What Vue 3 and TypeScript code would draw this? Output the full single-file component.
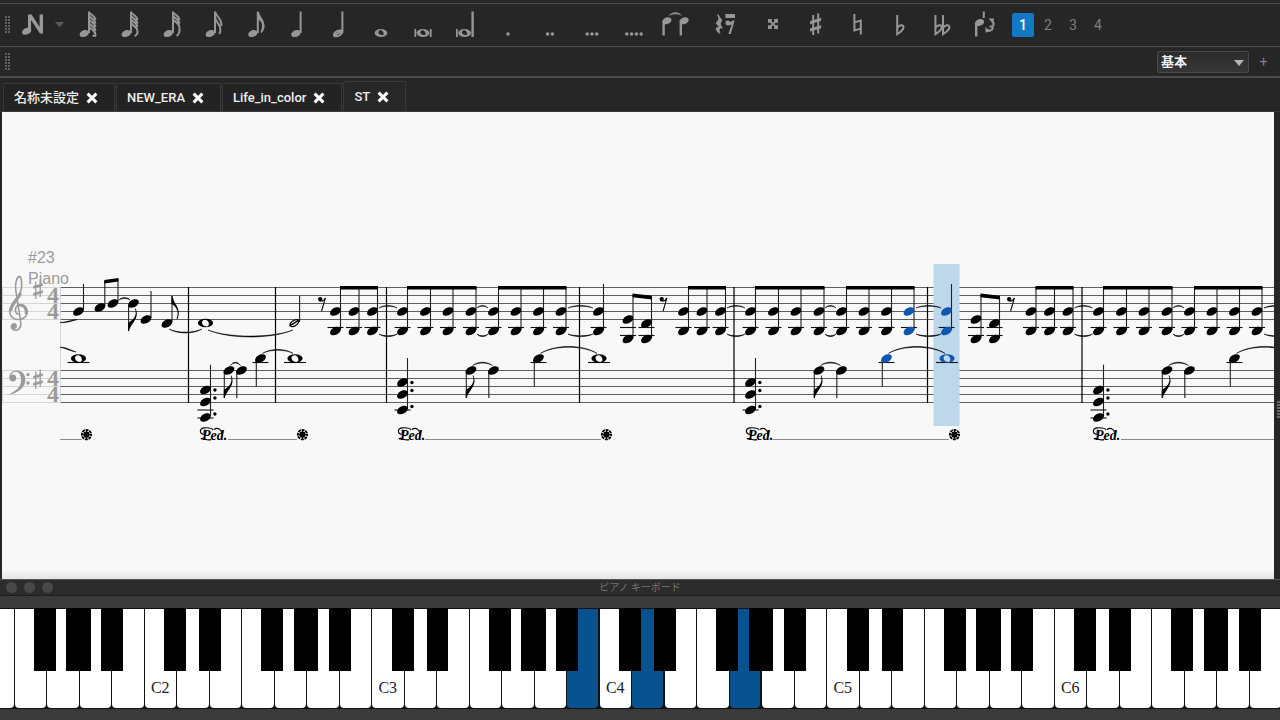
<script setup lang="ts">
import { ref } from 'vue'

type Head = { x: number; y: number; on?: boolean }
type Seg = { x1: number; y1: number; x2: number; y2: number }

/* ---------- toolbar ---------- */
const head = (x: number, y: number) =>
  `M${x - 4.8} ${y + 1.4}C${x - 4.6} ${y - 1.8} ${x - 0.5} ${y - 3.8} ${x + 2.2} ${y - 3.2}C${x + 5} ${y - 2.6} ${x + 4.9} ${y} ${x + 3.6} ${y + 1.6}C${x + 1.6} ${y + 3.8} ${x - 4.6} ${y + 5} ${x - 4.8} ${y + 1.4}Z`
const flags = (n: number) => {
  let d = ''
  for (let i = 0; i < n; i++) d += `M1 ${12 + i * 3.6}C2 ${15 + i * 3.6} 7 ${15 + i * 3.6} 7.4 ${20 + i * 3.6}`
  const y = 12 + (n - 1) * 3.6
  return d + `M7.4 ${y + 8}C8 ${y + 11} 7 35 4.6 36`
}
const stem = 'M0 11.5H2V33H0Z'
const whole = (x: number) =>
  `M${x - 6.4} 33a6.4 4 0 1 1 12.8 0a6.4 4 0 1 1 -12.8 0ZM${x - 2.6} 32c-.4 2 2 3 4 3c1.2 0 1.8 -1 .6 -3c-1 -2 -3.6 -2.4 -4.6 0Z`
const breve = (x: number) => whole(x) + `M${x - 8.6} 29h1.8v8h-1.8ZM${x + 6.8} 29h1.8v8h-1.8Z`
const dots = (n: number) =>
  Array.from({ length: n }, (_, i) => {
    const x = (i - (n - 1) / 2) * 4.8
    return `M${x - 1.8} 34a1.8 1.8 0 1 0 3.6 0a1.8 1.8 0 1 0 -3.6 0Z`
  }).join('')
const flat = (x: number) => `M${x} 15V34.2C${x + 3} 32.5 ${x + 7} 29 ${x + 6.4} 26.6C${x + 5.6} 24.4 ${x + 2} 25 ${x} 28`

interface Icon { name: string; fill?: string; line?: string; wide?: boolean }
const icons: Icon[] = [
  { name: '128分音符', fill: head(-3.6, 33.4) + stem, line: flags(5) },
  { name: '64分音符', fill: head(-3.6, 33.4) + stem, line: flags(4) },
  { name: '32分音符', fill: head(-3.6, 33.4) + stem, line: flags(3) },
  { name: '16分音符', fill: head(-3.6, 33.4) + stem, line: 'M1.4 12C2 17 8 18 7.4 26M1.4 18C2 23 9 26 5.4 34' },
  { name: '8分音符', fill: head(-3, 33.4) + 'M.8 11.5H2.8C4 17 8.6 20 8.6 26C8.6 29 7.4 31 5.4 33L4.4 32C7.4 26 5.8 21 2.8 20V33H.8Z' },
  { name: '4分音符', fill: head(-2, 33.4) + 'M1.6 11.5H3.6V33H1.6Z' },
  { name: '2分音符', fill: 'M1.4 11.5H3.4V33H1.4Z', line: 'M-6 35.4C-6.4 32 -1 29.6 1.8 31C3.2 33 -1 36.4 -3.6 36.2C-5 36.2 -6 36 -6 35.4ZL2 31.2' },
  { name: '全音符', fill: whole(-1) },
  { name: '倍全音符', fill: breve(-1) },
  { name: 'ロンガ', fill: breve(-1.4) + 'M5.4 11.5h2.4V37H5.4Z' },
  { name: '付点', fill: dots(1) },
  { name: '複付点', fill: dots(2) },
  { name: '三重付点', fill: dots(3) },
  { name: '四重付点', fill: dots(4) },
  { name: 'タイ', fill: head(-9, 20.6) + head(8.2, 20.6) + 'M-13.6 20.6h2.4V35.6h-2.4ZM3.6 20.6h2.4V35.6h-2.4ZM-7.4 16C-4 11 3 11 6 16C3 13.8 -4 13.8 -7.4 16Z' },
  { name: '休符', wide: true, fill: 'M-7 14L-2.6 20.5C-5 23 -4.6 25 -1.6 28.6C-5 27.6 -6.4 29 -4.6 33L-5.4 33.8C-10 30.4 -10.6 26.6 -6 27L-9.4 23C-6 20 -6 18.4 -7.8 15ZM.4 14h9.6v4H.4ZM.4 23a2.4 2.4 0 1 1 4.8 0a2.4 2.4 0 1 1 -4.8 0ZM7.6 20.6H9.6L5.8 34H3.4L6.6 24.6L3.4 25.4V23.4Z' },
  { name: 'ダブルシャープ', wide: true, fill: 'M-6 19h3.8v2.4l1.2 1.4l1.2 -1.4v-2.4h3.8v3.8h-2.4l-1.4 1.2l1.4 1.2h2.4v3.8h-3.8v-2.4l-1.2 -1.4l-1.2 1.4v2.4h-3.8v-3.8h2.4l1.4 -1.2l-1.4 -1.2h-2.4Z' },
  { name: 'シャープ', fill: 'M-6 21.2L5.2 17.8V20.8L-6 24.2ZM-6 28.6L5.2 25.2V28.2L-6 31.6Z', line: 'M-2.8 15V35M2.2 13.6V33.6' },
  { name: 'ナチュラル', line: 'M-3.6 14V30.4L2.8 28.6M-3.6 22.4L2.8 20.6V34.4' },
  { name: 'フラット', line: flat(-2.8) },
  { name: 'ダブルフラット', line: flat(-6.6) + flat(1) },
  { name: '音符の反転', fill: head(-4.4, 22.4) + 'M-9 22.4h2.4v14h-2.4ZM-1.2 11.5H.8V18H-1.2ZM4.6 18.6L10 18.4L9.4 24ZM1.4 27L1.6 32.6L6.8 31.6Z', line: 'M7.6 20.6C11 23.4 10 27.4 5.6 26.4M3.6 29.8C6.4 31.6 9.4 29.6 8.4 26.8' },
]
const voice = ref(1)
const tabs = ['名称未設定', 'NEW_ERA', 'Life_in_color', 'ST']
const activeTab = ref(3)
const workspace = ref('基本')

/* ---------- score ---------- */
const treble = [287.5, 295.5, 303.5, 311.5, 319.5]
const bass = [370.5, 378.5, 386.5, 394.5, 402.5]
const bars = [188.5, 275.5, 386.5, 579.5, 734, 927.5, 1082]
const heads: Head[] = []
const wholes: Head[] = []
const lines: Seg[] = []
const ledgers: Seg[] = []
const ties: string[] = []
const beams: string[] = []
const downFlags: { x: number; y: number }[] = []
const addDots: Head[] = []
const rests = [322, 663.5, 1011]

const note = (x: number, y: number, on = false) => heads.push({ x, y, on })
const vline = (x: number, y1: number, y2: number) => lines.push({ x1: x, x2: x, y1, y2 })
const ledger = (x: number, y: number, w = 8) => ledgers.push({ x1: x - w, x2: x + w, y1: y, y2: y })
const tie = (x1: number, x2: number, y: number, h: number, y2 = y) => {
  const m = (x2 - x1) / 4
  const c = h * 1.33
  const t = h > 0 ? -1.2 : 1.2
  ties.push(`M${x1} ${y}C${x1 + m} ${y + c} ${x2 - m} ${y2 + c} ${x2} ${y2}C${x2 - m} ${y2 + c + t} ${x1 + m} ${y + c + t} ${x1} ${y}Z`)
}
const beam = (x1: number, y1: number, x2: number, y2: number) =>
  beams.push(`M${x1 - 0.5} ${y1}L${x2 + 0.5} ${y2}v3.6L${x1 - 0.5} ${y1 + 3.6}Z`)
const dyad = (x: number, top: number, on = false) => {
  note(x, 311.5, on)
  note(x, 331, on)
  ledger(x, 327.5)
  vline(x + 5, top, 330)
}
const group = (xs: number[], lastOn = false) => {
  xs.forEach((x, i) => dyad(x, 287, lastOn && i === xs.length - 1))
  beam(xs[0] + 5, 286, xs[xs.length - 1] + 5, 286)
}
const pairTie = (x1: number, x2: number) => {
  tie(x1, x2, 308, -2.6)
  tie(x1, x2, 334, 2.6)
}

/* opening bars */
note(78.5, 311.5); vline(83.5, 284, 310)
note(100, 307.5); vline(104.8, 281, 306)
note(113, 303.5); vline(118, 279, 302)
beam(104.8, 280, 118, 278)
tie(119, 130, 300, -2.4)
note(133.5, 303.5); vline(128.6, 305, 331); downFlags.push({ x: 128.6, y: 331 })
note(146, 319.5); vline(151, 291, 318)
note(167, 323.5); vline(172, 296, 322)
tie(60, 77, 322.4, 1, 319.6)
tie(169, 202, 329, 4)
tie(208, 293, 330, 7)
wholes.push({ x: 205.5, y: 323 })
vline(299.6, 296, 322)

/* repeated figures, one period every 348 units */
for (const o of [0, 348]) {
  group([335.5 + o, 354 + o, 372.5 + o])
  pairTie(379 + o, 397 + o)
}
group([1031, 1049.5, 1068])
pairTie(1074.5, 1092.5)
for (const o of [0, 348, 696]) {
  group([402.5 + o, 425.5 + o, 448 + o, 471 + o])
  pairTie(477 + o, 488 + o)
  group([493.5 + o, 516 + o, 538.5 + o, 561 + o], o === 348)
  pairTie(568 + o, 593 + o)
  const a = o === 696 ? 7.5 : 0
  chord(402.5 + o, a)
  bassFigure(471 + o, 493.5 + o, 538.5 + o, 599 + o, o === 348)
}
for (const o of [0, 348]) {
  dyad(598.5 + o, 284, o === 348)
  note(628 + o, 319.5); note(628 + o, 339); vline(633 + o, 295, 338)
  note(646.5 + o, 323.5); note(646.5 + o, 339); vline(651.5 + o, 297, 338)
  for (const x of [628, 646.5]) { ledger(x + o, 327.5); ledger(x + o, 335.5) }
  beam(633 + o, 293.6, 651.5 + o, 295.8)
}
function chord(x: number, shift: number) {
  for (const y of [382.5, 394.5, 410]) note(x, y + shift)
  ledger(x, 410)
  if (shift) ledger(x, 418)
  vline(x + 5, 358 + shift * 0.9, 409 + shift)
  for (const y of [382.5, 390.5, 406.5]) addDots.push({ x: x + 10, y: y + shift })
}
function bassFigure(e: number, q: number, h: number, w: number, on: boolean) {
  note(e, 370.5); vline(e - 4.7, 371, 398); downFlags.push({ x: e - 4.7, y: 398 })
  note(q, 370.5); vline(q - 4.7, 371, 398)
  tie(e + 1.5, q - 1, 365.6, -3.4)
  note(h, 358.5, on); vline(h - 4.2, 360, 386.5); ledger(h, 362.5)
  tie(h + 2, w - 2, 353.4, w - h > 50 ? -7 : -4)
  wholes.push({ x: w, y: 358.5, on })
  ledger(w, 362.5, 11)
}
chord(205.5, 7.5)
bassFigure(229, 241.5, 260.5, 295, false)
wholes.push({ x: 78.5, y: 358.5 }); ledger(78.5, 362.5, 11)
tie(60, 76, 347.4, -1, 352)

const pedals = [200, 398, 746, 1093]
const pedalLines = [[60, 82], [228, 297], [425, 601], [773, 949], [1121, 1276]]
const releases = [86.5, 302.5, 606.5, 954.5]

/* ---------- keyboard ---------- */
const names = ['C', 'D', 'E', 'F', 'G', 'A', 'B']
const pressed = ['B3', 'D4', 'G4']
const keys = Array.from({ length: 40 }, (_, i) => {
  const n = i + 2
  const letter = names[n % 7]
  const octave = Math.floor(n / 7) + 1
  return { id: letter + octave, letter, sharp: letter !== 'E' && letter !== 'B', on: pressed.includes(letter + octave) }
})
</script>

<template>
  <div class="app">
    <div class="toolbar notes">
      <svg class="grip" width="6" height="18" viewBox="0 0 6 18"><g v-for="r in 6" :key="r"><rect x="0" :y="r * 3 - 3" width="2" height="2" /><rect x="3" :y="r * 3 - 3" width="2" height="2" /></g></svg>
      <button class="input-mode" aria-label="音符入力">
        <svg width="46" height="42" viewBox="20 4 46 42">
          <path :d="head(26.8, 31)" />
          <path d="M28 14.6H31.6L39.6 27V14.6H43V33.6H40L31 20V32H28Z" />
          <path class="caret" d="M55 22H64L59.5 27Z" />
        </svg>
      </button>
      <button v-for="ic in icons" :key="ic.name" class="tool" :class="{ wide: ic.wide }" :aria-label="ic.name">
        <svg width="42" height="42" viewBox="-21 4 42 42">
          <path v-if="ic.fill" :d="ic.fill" />
          <path v-if="ic.line" :d="ic.line" class="stroke" />
        </svg>
      </button>
      <div class="voices">
        <button v-for="v in 4" :key="v" :class="{ active: voice === v }" @click="voice = v">{{ v }}</button>
      </div>
    </div>

    <div class="toolbar workspace">
      <svg class="grip" width="6" height="18" viewBox="0 0 6 18"><g v-for="r in 6" :key="r"><rect x="0" :y="r * 3 - 3" width="2" height="2" /><rect x="3" :y="r * 3 - 3" width="2" height="2" /></g></svg>
      <label class="picker">
        <select v-model="workspace" aria-label="ワークスペース"><option>基本</option></select>
        <svg width="10" height="6" viewBox="0 0 10 6"><path d="M0 0H10L5 6Z" /></svg>
      </label>
      <button class="add" aria-label="追加">+</button>
    </div>

    <nav class="tabs">
      <div v-for="(t, i) in tabs" :key="t" class="tab" :class="{ current: activeTab === i }">
        <button class="title" @click="activeTab = i">{{ t }}</button>
        <button class="close" :aria-label="t + ' を閉じる'">
          <svg width="12" height="12" viewBox="0 0 12 12"><path d="M1.6 1.6L10.4 10.4M10.4 1.6L1.6 10.4" /></svg>
        </button>
      </div>
    </nav>

    <main class="stage">
      <svg class="score" viewBox="2 112 1272 467" preserveAspectRatio="xMinYMid slice">
        <defs>
          <path id="nh" d="M-5.4 1.8C-5.3 -1.7 -1.2 -4.4 2 -4.2C4.6 -4 5.6 -2.6 5.3 -1.2C5 1.8 .8 4.6 -2.6 4.2C-4.4 4 -5.4 3.2 -5.4 1.8Z" />
          <path id="wn" fill-rule="evenodd" d="M-7.6 0A7.6 4.2 0 1 0 7.6 0A7.6 4.2 0 1 0 -7.6 0ZM-3.4 -1.2C-2.8 -4 1 -4 2.6 -1.6C4 .8 3.6 3.4 1 3.5C-1.8 3.4 -3.8 1 -3.4 -1.2Z" />
          <path id="fd" d="M-.5 0V-8C3 -11 9.4 -14 6.4 -22.6H7.1C11.4 -12 2 -8 .5 0Z" />
          <g id="sh">
            <path d="M-2.2 -7.6V10M2.2 -9.6V8" fill="none" stroke="#9b9b9b" stroke-width="1.3" />
            <path d="M-4.8 -3L4.8 -5.8V-3L-4.8 -.2ZM-4.8 4L4.8 1.2V4L-4.8 6.8Z" />
          </g>
          <g id="rest"><circle cx="-1.8" cy="-4.4" r="2.2" /><path d="M-3 -3C0 -1.6 2 -3 3.4 -5.6L-.4 7.6" fill="none" stroke="#000" stroke-width="1.1" /></g>
          <g id="rel" fill="none" stroke="#000">
            <circle r="2.4" stroke-width="1.4" />
            <path d="M0 -5V5M-5 0H5M-3.5 -3.5L3.5 3.5M3.5 -3.5L-3.5 3.5" stroke-width="1" />
            <circle r="4.7" stroke-width="1.8" stroke-dasharray="2.9 0.79" stroke-dashoffset="1.45" />
          </g>
          <g id="ped">
            <text class="ped" x="2" y="440">Ped.</text>
            <path class="swash" d="M5.4 434C-.6 435.4 -1.4 428.4 4 427.8C8 427.6 12 427.4 13.2 430M3.4 432C5.4 432.4 6 430.4 4.4 429.8M.8 439C3 436.4 6 441.4 11 439.6M14 429.4C18 426.6 22.4 430 22 436" />
          </g>
        </defs>

        <g class="staff">
          <path v-for="y in [...treble, ...bass]" :key="y" :d="`M60 ${y}H1276`" />
        </g>
        <g class="staff ghost">
          <path v-for="y in [...treble, ...bass]" :key="y" :d="`M2 ${y}H60`" />
          <path d="M60.5 287V403M2.5 287V320M2.5 370V403" />
        </g>
        <rect class="cursor" x="933.5" y="264" width="26" height="162" />
        <path v-for="b in bars" :key="b" class="bar" :d="`M${b} 287V403`" />
        <g class="thin">
          <line v-for="(l, i) in lines" :key="i" v-bind="l" />
        </g>
        <g class="ledger">
          <line v-for="(l, i) in ledgers" :key="i" v-bind="l" />
        </g>
        <path v-for="(b, i) in beams" :key="'b' + i" :d="b" />
        <path v-for="(t, i) in ties" :key="'t' + i" :d="t" class="tie" />
        <use v-for="(n, i) in heads" :key="'n' + i" href="#nh" :x="n.x" :y="n.y" :class="{ on: n.on }" />
        <use v-for="(n, i) in wholes" :key="'w' + i" href="#wn" :x="n.x" :y="n.y" :class="{ on: n.on }" />
        <use v-for="(f, i) in downFlags" :key="'f' + i" href="#fd" :x="f.x" :y="f.y" />
        <path d="M171.5 296V304C175 306 180 310 176.6 319H177.6C182 308 173.4 304 172.6 296Z" />
        <path class="half" d="M290 325.6C289.4 322.4 294.6 319 298 319.8C300.6 322 295.6 326.8 292 326.6C290.8 326.6 290.2 326.4 290 325.6ZL298.6 320.4" />
        <circle v-for="(d, i) in addDots" :key="'d' + i" :cx="d.x - 0.6" :cy="d.y" r="1.7" />
        <use v-for="r in rests" :key="'r' + r" href="#rest" :x="r" y="303.5" />

        <g class="head">
          <text x="28" y="263">#23</text>
          <text x="28" y="283.5">Piano</text>
          <g class="clef">
            <path d="M18.6 314.6C13.6 312.4 15 305 20 304.8C27 304.8 28.8 312.4 25.4 316.6C20.6 321.6 10 320.2 9.8 311.2C9.8 302 20.6 297.6 21.6 287.6C22 281 21 276.4 19.4 276.4C17 277 14.6 283.4 15.8 290.4L20.6 321C21.6 328 18.6 330.4 15.4 330.2C12.4 330 11 328 11.4 325.4" />
            <path class="heavy" d="M10.8 311C11 304.6 18 300 20.8 293M18.2 305.4C24 303.6 27.4 309.6 26 314.4" />
          </g>
          <circle cx="14" cy="326" r="2.9" />
          <circle cx="12.8" cy="378" r="3.4" />
          <path d="M9.4 378C9 373.4 12.6 370.6 16.6 370.6C22 370.6 25.4 374.2 25.4 380C25.4 387.4 18.6 392.4 9.6 394.6L9.4 394C16.6 390.6 21 387 21 380C21 375.4 19.6 371.8 16 371.8C13 371.8 10.8 374 10.4 377Z" />
          <circle cx="28" cy="374.6" r="1.7" /><circle cx="28" cy="383" r="1.7" />
          <use href="#sh" x="38" y="289" /><use href="#sh" x="38" y="379" />
          <g class="meter">
            <text x="53" y="303">4</text><text x="53" y="319">4</text>
            <text x="53" y="386">4</text><text x="53" y="402">4</text>
          </g>
        </g>

        <use v-for="p in pedals" :key="'p' + p" href="#ped" :x="p" />
        <path v-for="l in pedalLines" :key="'l' + l[0]" class="pedline" :d="`M${l[0]} 439.5H${l[1]}`" />
        <use v-for="r in releases" :key="'x' + r" href="#rel" :x="r" y="434.6" />
      </svg>
      <svg class="splitter" width="3" height="18" viewBox="0 0 3 18"><rect v-for="r in 6" :key="r" x="0" :y="r * 3 - 3" width="3" height="2" /></svg>
    </main>

    <section class="piano">
      <header>
        <div class="lights"><i></i><i></i><i></i></div>
        <span>ピアノ キーボード</span>
      </header>
      <div class="bed">
        <div class="keys">
          <div v-for="k in keys" :key="k.id" class="key">
            <button class="white" :class="{ on: k.on }" :aria-label="k.id">{{ k.letter === 'C' ? k.id : '' }}</button>
            <button v-if="k.sharp" class="black" :class="'s' + k.letter" :aria-label="k.letter + '♯'"></button>
          </div>
        </div>
      </div>
    </section>
  </div>
</template>

<style>
body { background: #262626; }
</style>

<style scoped>
.app {
  min-height: 100vh; display: flex; flex-direction: column; box-sizing: border-box;
  padding-top: 3px; background: #262626; color: #eee; overflow: hidden;
  font: 13px/16px Roboto, "Noto Sans CJK JP", sans-serif;
}
button { border: 0; padding: 0; margin: 0; background: none; color: inherit; font: inherit; }
svg { display: block; flex: none; }
.toolbar { display: flex; align-items: center; padding-left: 5px; }
.notes { height: 42px; border-top: 1px solid #505050; border-bottom: 1px solid #505050; }
.workspace { height: 29px; border-bottom: 2px solid #4c4c4c; }
.grip { fill: #606060; }
.input-mode { margin-left: 9px; width: 47px; fill: #999; }
.input-mode .caret { fill: #5c5c5c; }
.tool { width: 42px; flex: none; fill: #969696; }
.tool.wide { margin-left: 7px; }
.stroke { fill: none; stroke: #969696; stroke-width: 2; }
.voices { display: flex; gap: 3px; margin-left: 7px; }
.voices button { width: 22px; height: 24px; border-radius: 2px; font-size: 14px; color: #7d7d7d; }
.voices .active { background: #1279c4; color: #fff; font-weight: 500; }
.picker { position: relative; margin-left: auto; display: block; width: 92px; }
.picker select {
  display: block; width: 100%; height: 22px; padding: 0 3px; appearance: none; border: 1px solid #484848;
  border-radius: 2px; background: linear-gradient(#2c2c2c, #363636); color: #f2f2f2;
  font: bold 13px/16px Roboto, "Noto Sans CJK JP", sans-serif;
}
.picker svg { position: absolute; right: 5px; top: 9px; fill: #b5b5b5; pointer-events: none; }
.add { width: 29px; margin-right: 2px; color: #808080; font-size: 14px; }

.tabs { display: flex; align-items: flex-end; gap: 1px; height: 33px; padding-left: 3px; border-bottom: 1px solid #3a3a3a; }
.tab {
  display: flex; align-items: center; gap: 7px; height: 27px; padding: 0 16px 0 10px;
  border: 1px solid #383838; border-bottom: 0; border-radius: 2px 2px 0 0; background: #232323;
}
.tab.current { height: 29px; background: #272727; }
.title { color: #ededed; font-weight: 500; }
.close svg { fill: none; stroke: #fff; stroke-width: 3; }

.stage {
  flex: 1; display: flex; position: relative; margin-left: 2px; padding-right: 6px;
  background: linear-gradient(90deg, transparent calc(100% - 6px), #262626 0), linear-gradient(#f8f8f8 calc(100% - 10px), #e4e4e4);
}
.score { flex: 1; min-width: 0; width: 100%; overflow: hidden; }
.splitter { position: absolute; right: 0; top: 289px; fill: #6a6a6a; }
.staff path { stroke: #4c4c4c; stroke-width: 0.9; }
.staff.ghost path { stroke: #d0d0d0; }
.bar { stroke: #000; stroke-width: 1.2; }
.thin line { stroke: #222; stroke-width: 1.1; }
.ledger line { stroke: #111; stroke-width: 1.1; }
.tie { stroke: #000; stroke-width: 0.5; }
.on { fill: #0f56b3; }
.cursor { fill: #bdd7eb; }
.half { fill: none; stroke: #000; stroke-width: 1.3; }
.head { fill: #9b9b9b; }
.head text { font: 16px "Liberation Sans", sans-serif; }
.head .meter text { font: bold 24px "Liberation Serif", serif; text-anchor: middle; }
.clef { fill: none; stroke: #9b9b9b; stroke-width: 1.6; }
.clef .heavy { stroke-width: 2.8; }
.ped { font: italic bold 14px "Liberation Serif", serif; }
.swash { fill: none; stroke: #000; stroke-width: 1.2; }
.pedline { stroke: #8a8a8a; stroke-width: 1; }

.piano { background: #3a3a3a; border-top: 1px solid #555; }
.piano header {
  position: relative; display: flex; justify-content: center; height: 15px; background: #2c2c2c;
  border-bottom: 1px solid #1e1e1e; color: #757575; font-size: 10px; line-height: 16px;
}
.lights { position: absolute; left: 6px; top: 2px; display: flex; gap: 7px; }
.lights i { width: 11px; height: 11px; border-radius: 50%; background: #484848; }
.bed { padding: 12px 0; overflow: hidden; }
.keys { display: flex; margin: 0 -1px 0 -19px; height: 101px; background: #111; }
.key { flex: 1; position: relative; display: flex; padding-left: 1px; }
.white {
  flex: 1; margin: 1px 0; border-radius: 0 0 4px 4px; background: #fff; color: #222;
  font: 16px/18px "Liberation Serif", serif; padding-top: 59px;
}
.white.on { margin-right: 1px; background: #08538f; }
.black { position: absolute; z-index: 1; top: 0; height: 63px; width: 67%; background: #000; }
.sC { left: 64%; }
.sD { left: 71%; }
.sF { left: 63%; }
.sG { left: 63%; width: 74%; }
.sA { left: 70%; }
</style>
